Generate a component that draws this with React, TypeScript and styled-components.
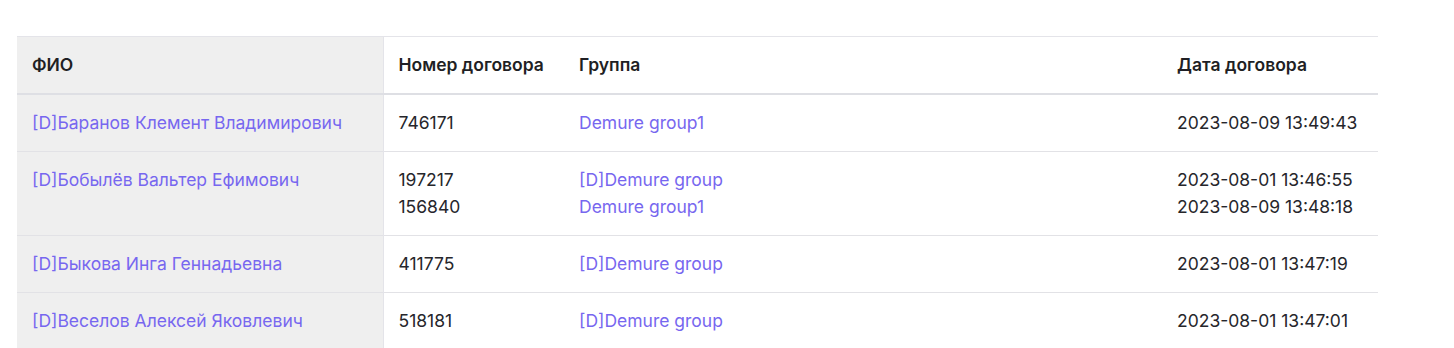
import styled, { createGlobalStyle } from 'styled-components';

const GlobalStyle = createGlobalStyle`
  body {
    margin: 0;
    background: #fff;
    font-family: Inter, "Noto Sans", sans-serif;
    color: #222;
  }
`;

const Page = styled.div`
  padding: 36px 76px 0 17px;
`;

const Table = styled.table`
  width: 1361px;
  border-collapse: collapse;
  table-layout: fixed;
  border-top: 1px solid #e4e4e9;
  font-size: 17.5px;
`;

const HeadCell = styled.th<{ $pinned?: boolean }>`
  text-align: left;
  font-weight: 600;
  height: 56px;
  padding: 0 15px;
  line-height: 24px;
  white-space: nowrap;
  color: #1f1f24;
  background: ${p => (p.$pinned ? '#efefef' : '#fff')};
  border-right: ${p => (p.$pinned ? '1px solid #e4e4e9' : 'none')};
  border-bottom: 2px solid #dedfe4;
`;

const Row = styled.tr`
  border-bottom: 1px solid #e2e2e6;
`;

const Cell = styled.td<{ $pinned?: boolean }>`
  vertical-align: top;
  padding: 16px 15px;
  line-height: 24px;
  white-space: nowrap;
  color: #26262b;
  background: ${p => (p.$pinned ? '#efefef' : '#fff')};
  border-right: ${p => (p.$pinned ? '1px solid #e4e4e9' : 'none')};
`;

const Stack = styled.div`
  display: flex;
  flex-direction: column;
  gap: 3px;
`;

const Link = styled.a`
  color: #7767ef;
  text-decoration: none;
  cursor: pointer;
`;

type Contract = { num: string; group: string; date: string };
type Client = { name: string; contracts: Contract[] };

const clients: Client[] = [
  {
    name: '[D]Баранов Клемент Владимирович',
    contracts: [{ num: '746171', group: 'Demure group1', date: '2023-08-09 13:49:43' }],
  },
  {
    name: '[D]Бобылёв Вальтер Ефимович',
    contracts: [
      { num: '197217', group: '[D]Demure group', date: '2023-08-01 13:46:55' },
      { num: '156840', group: 'Demure group1', date: '2023-08-09 13:48:18' },
    ],
  },
  {
    name: '[D]Быкова Инга Геннадьевна',
    contracts: [{ num: '411775', group: '[D]Demure group', date: '2023-08-01 13:47:19' }],
  },
  {
    name: '[D]Веселов Алексей Яковлевич',
    contracts: [{ num: '518181', group: '[D]Demure group', date: '2023-08-01 13:47:01' }],
  },
];

export default function App() {
  return (
    <>
      <GlobalStyle />
      <Page>
        <Table>
          <colgroup>
            <col style={{ width: 366 }} />
            <col style={{ width: 181 }} />
            <col style={{ width: 598 }} />
            <col style={{ width: 216 }} />
          </colgroup>
          <thead>
            <tr>
              <HeadCell $pinned>ФИО</HeadCell>
              <HeadCell>Номер договора</HeadCell>
              <HeadCell>Группа</HeadCell>
              <HeadCell>Дата договора</HeadCell>
            </tr>
          </thead>
          <tbody>
            {clients.map(c => (
              <Row key={c.name}>
                <Cell $pinned>
                  <Link>{c.name}</Link>
                </Cell>
                <Cell>
                  <Stack>
                    {c.contracts.map(k => (
                      <span key={k.num}>{k.num}</span>
                    ))}
                  </Stack>
                </Cell>
                <Cell>
                  <Stack>
                    {c.contracts.map(k => (
                      <Link key={k.num}>{k.group}</Link>
                    ))}
                  </Stack>
                </Cell>
                <Cell>
                  <Stack>
                    {c.contracts.map(k => (
                      <span key={k.num}>{k.date}</span>
                    ))}
                  </Stack>
                </Cell>
              </Row>
            ))}
          </tbody>
        </Table>
      </Page>
    </>
  );
}
